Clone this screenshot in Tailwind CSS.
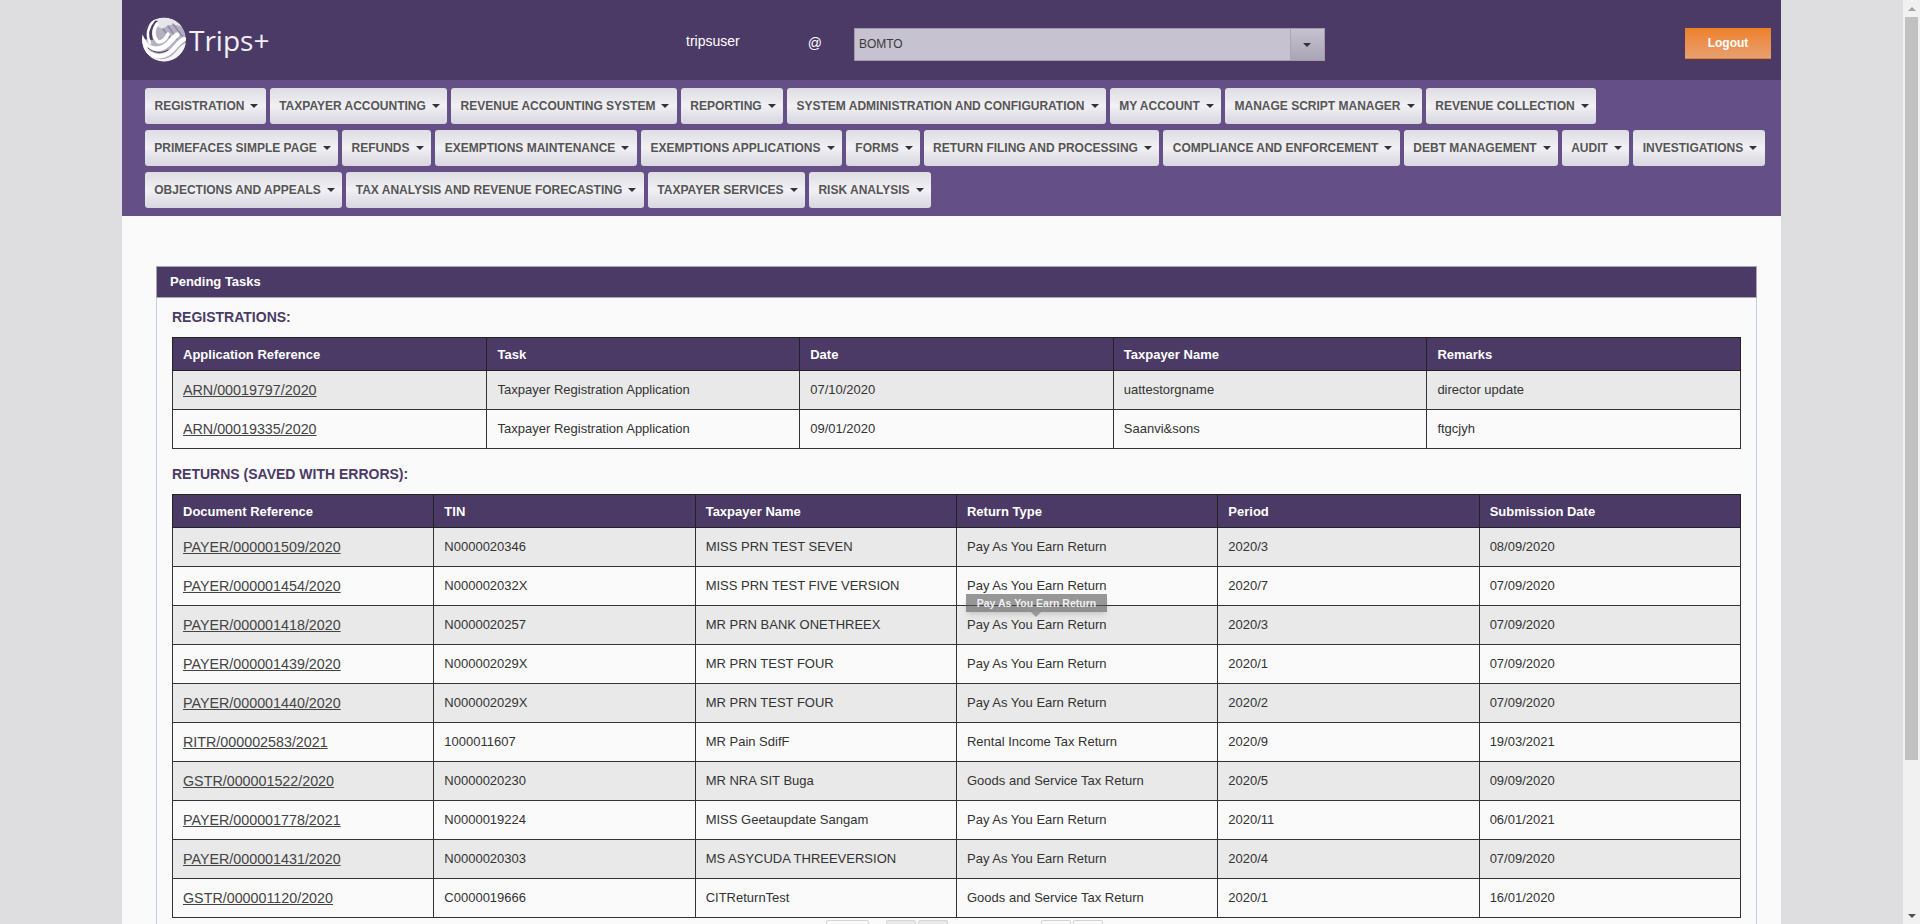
<!DOCTYPE html>
<html lang="en">
<head>
    <meta charset="UTF-8">
    <title>Trips+ Pending Tasks</title>
    <script src="https://cdn.jsdelivr.net/npm/@tailwindcss/browser@4"></script>
</head>
<body class="h-screen overflow-hidden flex bg-[#dedee0] font-['Liberation_Sans',Arial,sans-serif]">

<div class="flex-1 h-[924px] overflow-hidden">
    <div class="w-[1659px] mx-auto h-[1000px] bg-[#fafafa]">

        <!-- top bar -->
        <header class="h-20 bg-[#4b3a66] relative flex items-start">
            <div class="w-[232px] pl-5 pt-[17px] flex items-center gap-[3px] shrink-0">
                <svg width="44" height="45" viewBox="0 0 44 45" class="shrink-0">
                    <defs><clipPath id="globe"><circle cx="22" cy="22.5" r="22"/></clipPath></defs>
                    <g clip-path="url(#globe)" fill="none" stroke-linecap="round">
                        <circle cx="22" cy="22.5" r="22" fill="#b4b0c1" stroke="none"/>
                        <path d="M11 3C20 -2 36 0 44 12C36 7 28 6 22 11C19 13 14 9 11 3Z" fill="#e6e5ec" stroke="none"/>
                        <path d="M26 9L35 22M31 7L41 20M21 12L29 22" stroke="#8f8aa3" stroke-width="1.5"/>
                        <path d="M0 12C8 4 12 3 16 4C10 9 9 16 11 23L0 22Z" fill="#4b3a66" stroke="none"/>
                        <path d="M12 3C6 10 4 18 8 26" stroke="#ffffff" stroke-width="2.5"/>
                        <path d="M15 7C11 13 11 19 15 24C19 27 24 22 26 17" stroke="#ffffff" stroke-width="3.5"/>
                        <path d="M-1 20C3 30 12 35 22 30C28 27 30 21 35 18" stroke="#ffffff" stroke-width="5"/>
                        <path d="M1 30C7 39 18 42 27 36C33 32 35 26 42 22" stroke="#ffffff" stroke-width="4.5"/>
                        <path d="M9 42C18 47 30 45 37 35C39 32 41 30 45 28" stroke="#f4f4f6" stroke-width="5"/>
                        <path d="M6 31C12 36 20 37 26 33" stroke="#4b3a66" stroke-width="1"/>
                    </g>
                </svg>
                <span class="text-[28px] leading-none font-medium text-[#f1f0f5] font-['Open_Sans',sans-serif]">Trips+</span>
            </div>
            <span class="ml-[332px] mt-[31px] text-sm text-white">tripsuser</span>
            <span class="ml-[68px] mt-[33px] text-sm text-white">@</span>
            <div class="ml-[32px] mt-7 w-[471px] h-[33px] flex bg-[#c6c2d0] border border-[#a09cab]">
                <span class="flex-1 pl-[4px] text-xs leading-[30px] text-[#3a3a3a]">BOMTO</span>
                <span class="w-[34px] flex items-center justify-center border-l border-[#aaa6b5] bg-gradient-to-b from-[#c6c2d0] to-[#a9a5b4]">
                    <span class="border-x-[4px] border-t-[4px] border-x-transparent border-t-[#333]"></span>
                </span>
            </div>
            <button class="ml-auto mr-[10px] mt-7 w-[86px] h-[31px] text-xs font-bold text-white border-b border-[#ee7f22] bg-gradient-to-b from-[#ee8026] to-[#e6a06d]">Logout</button>
        </header>

        <!-- main menu -->
        <nav class="h-[136px] bg-[#644f87] pl-[23px] pt-2 flex flex-col gap-[6px]">
            <div class="flex gap-1">
                <button class="h-9 w-[121px] pl-[2px] rounded-[3px] bg-gradient-to-b from-[#dedde3] via-[#f1f0f4] to-[#d8d6df] text-xs text-[#555] flex items-center justify-center gap-[6px] font-bold">REGISTRATION <i class="border-x-[4px] border-t-[4px] border-x-transparent border-t-[#333]"></i></button>
                <button class="h-9 w-[177px] pl-[2px] rounded-[3px] bg-gradient-to-b from-[#dedde3] via-[#f1f0f4] to-[#d8d6df] text-xs text-[#555] flex items-center justify-center gap-[6px] font-bold">TAXPAYER ACCOUNTING <i class="border-x-[4px] border-t-[4px] border-x-transparent border-t-[#333]"></i></button>
                <button class="h-9 w-[226px] pl-[2px] rounded-[3px] bg-gradient-to-b from-[#dedde3] via-[#f1f0f4] to-[#d8d6df] text-xs text-[#555] flex items-center justify-center gap-[6px] font-bold">REVENUE ACCOUNTING SYSTEM <i class="border-x-[4px] border-t-[4px] border-x-transparent border-t-[#333]"></i></button>
                <button class="h-9 w-[102px] pl-[2px] rounded-[3px] bg-gradient-to-b from-[#dedde3] via-[#f1f0f4] to-[#d8d6df] text-xs text-[#555] flex items-center justify-center gap-[6px] font-bold">REPORTING <i class="border-x-[4px] border-t-[4px] border-x-transparent border-t-[#333]"></i></button>
                <button class="h-9 w-[319px] pl-[2px] rounded-[3px] bg-gradient-to-b from-[#dedde3] via-[#f1f0f4] to-[#d8d6df] text-xs text-[#555] flex items-center justify-center gap-[6px] font-bold">SYSTEM ADMINISTRATION AND CONFIGURATION <i class="border-x-[4px] border-t-[4px] border-x-transparent border-t-[#333]"></i></button>
                <button class="h-9 w-[111px] pl-[2px] rounded-[3px] bg-gradient-to-b from-[#dedde3] via-[#f1f0f4] to-[#d8d6df] text-xs text-[#555] flex items-center justify-center gap-[6px] font-bold">MY ACCOUNT <i class="border-x-[4px] border-t-[4px] border-x-transparent border-t-[#333]"></i></button>
                <button class="h-9 w-[197px] pl-[2px] rounded-[3px] bg-gradient-to-b from-[#dedde3] via-[#f1f0f4] to-[#d8d6df] text-xs text-[#555] flex items-center justify-center gap-[6px] font-bold">MANAGE SCRIPT MANAGER <i class="border-x-[4px] border-t-[4px] border-x-transparent border-t-[#333]"></i></button>
                <button class="h-9 w-[170px] pl-[2px] rounded-[3px] bg-gradient-to-b from-[#dedde3] via-[#f1f0f4] to-[#d8d6df] text-xs text-[#555] flex items-center justify-center gap-[6px] font-bold">REVENUE COLLECTION <i class="border-x-[4px] border-t-[4px] border-x-transparent border-t-[#333]"></i></button>
            </div>
            <div class="flex gap-1">
                <button class="h-9 w-[193px] pl-[2px] rounded-[3px] bg-gradient-to-b from-[#dedde3] via-[#f1f0f4] to-[#d8d6df] text-xs text-[#555] flex items-center justify-center gap-[6px] font-bold">PRIMEFACES SIMPLE PAGE <i class="border-x-[4px] border-t-[4px] border-x-transparent border-t-[#333]"></i></button>
                <button class="h-9 w-[89px] pl-[2px] rounded-[3px] bg-gradient-to-b from-[#dedde3] via-[#f1f0f4] to-[#d8d6df] text-xs text-[#555] flex items-center justify-center gap-[6px] font-bold">REFUNDS <i class="border-x-[4px] border-t-[4px] border-x-transparent border-t-[#333]"></i></button>
                <button class="h-9 w-[202px] pl-[2px] rounded-[3px] bg-gradient-to-b from-[#dedde3] via-[#f1f0f4] to-[#d8d6df] text-xs text-[#555] flex items-center justify-center gap-[6px] font-bold">EXEMPTIONS MAINTENANCE <i class="border-x-[4px] border-t-[4px] border-x-transparent border-t-[#333]"></i></button>
                <button class="h-9 w-[201px] pl-[2px] rounded-[3px] bg-gradient-to-b from-[#dedde3] via-[#f1f0f4] to-[#d8d6df] text-xs text-[#555] flex items-center justify-center gap-[6px] font-bold">EXEMPTIONS APPLICATIONS <i class="border-x-[4px] border-t-[4px] border-x-transparent border-t-[#333]"></i></button>
                <button class="h-9 w-[74px] pl-[2px] rounded-[3px] bg-gradient-to-b from-[#dedde3] via-[#f1f0f4] to-[#d8d6df] text-xs text-[#555] flex items-center justify-center gap-[6px] font-bold">FORMS <i class="border-x-[4px] border-t-[4px] border-x-transparent border-t-[#333]"></i></button>
                <button class="h-9 w-[235px] pl-[2px] rounded-[3px] bg-gradient-to-b from-[#dedde3] via-[#f1f0f4] to-[#d8d6df] text-xs text-[#555] flex items-center justify-center gap-[6px] font-bold">RETURN FILING AND PROCESSING <i class="border-x-[4px] border-t-[4px] border-x-transparent border-t-[#333]"></i></button>
                <button class="h-9 w-[237px] pl-[2px] rounded-[3px] bg-gradient-to-b from-[#dedde3] via-[#f1f0f4] to-[#d8d6df] text-xs text-[#555] flex items-center justify-center gap-[6px] font-bold">COMPLIANCE AND ENFORCEMENT <i class="border-x-[4px] border-t-[4px] border-x-transparent border-t-[#333]"></i></button>
                <button class="h-9 w-[154px] pl-[2px] rounded-[3px] bg-gradient-to-b from-[#dedde3] via-[#f1f0f4] to-[#d8d6df] text-xs text-[#555] flex items-center justify-center gap-[6px] font-bold">DEBT MANAGEMENT <i class="border-x-[4px] border-t-[4px] border-x-transparent border-t-[#333]"></i></button>
                <button class="h-9 w-[67px] pl-[2px] rounded-[3px] bg-gradient-to-b from-[#dedde3] via-[#f1f0f4] to-[#d8d6df] text-xs text-[#555] flex items-center justify-center gap-[6px] font-bold">AUDIT <i class="border-x-[4px] border-t-[4px] border-x-transparent border-t-[#333]"></i></button>
                <button class="h-9 w-[132px] pl-[2px] rounded-[3px] bg-gradient-to-b from-[#dedde3] via-[#f1f0f4] to-[#d8d6df] text-xs text-[#555] flex items-center justify-center gap-[6px] font-bold">INVESTIGATIONS <i class="border-x-[4px] border-t-[4px] border-x-transparent border-t-[#333]"></i></button>
            </div>
            <div class="flex gap-1">
                <button class="h-9 w-[197px] pl-[2px] rounded-[3px] bg-gradient-to-b from-[#dedde3] via-[#f1f0f4] to-[#d8d6df] text-xs text-[#555] flex items-center justify-center gap-[6px] font-bold">OBJECTIONS AND APPEALS <i class="border-x-[4px] border-t-[4px] border-x-transparent border-t-[#333]"></i></button>
                <button class="h-9 w-[298px] pl-[2px] rounded-[3px] bg-gradient-to-b from-[#dedde3] via-[#f1f0f4] to-[#d8d6df] text-xs text-[#555] flex items-center justify-center gap-[6px] font-bold">TAX ANALYSIS AND REVENUE FORECASTING <i class="border-x-[4px] border-t-[4px] border-x-transparent border-t-[#333]"></i></button>
                <button class="h-9 w-[157px] pl-[2px] rounded-[3px] bg-gradient-to-b from-[#dedde3] via-[#f1f0f4] to-[#d8d6df] text-xs text-[#555] flex items-center justify-center gap-[6px] font-bold">TAXPAYER SERVICES <i class="border-x-[4px] border-t-[4px] border-x-transparent border-t-[#333]"></i></button>
                <button class="h-9 w-[122px] pl-[2px] rounded-[3px] bg-gradient-to-b from-[#dedde3] via-[#f1f0f4] to-[#d8d6df] text-xs text-[#555] flex items-center justify-center gap-[6px] font-bold">RISK ANALYSIS <i class="border-x-[4px] border-t-[4px] border-x-transparent border-t-[#333]"></i></button>
            </div>
        </nav>

        <!-- pending tasks panel -->
        <section class="ml-[34px] mt-[50px] w-[1601px]">
            <h2 class="h-8 bg-[#4b3a66] border border-[#a9a5b4] pl-[13px] text-[13px] leading-[29px] font-bold text-white">Pending Tasks</h2>
            <div class="border-x border-[#c5d0dc] px-[15px] h-[700px]">
                <h3 class="pt-[11px] h-[39px] text-sm leading-[16px] font-bold text-[#4b3a66]">REGISTRATIONS:</h3>
                <table class="w-full table-fixed border-collapse border border-[#333] text-[13px] text-[#333]">
                    <thead class="bg-[#4b3a66] text-white">
                        <tr class="h-[33px]">
                            <th class="border border-[#222] px-[10px] pt-[1px] text-left">Application Reference</th>
                            <th class="border border-[#222] px-[11px] pt-[1px] text-left">Task</th>
                            <th class="border border-[#222] px-[10px] pt-[1px] text-left">Date</th>
                            <th class="border border-[#222] px-[10px] pt-[1px] text-left">Taxpayer Name</th>
                            <th class="border border-[#222] px-[10px] pt-[1px] text-left">Remarks</th>
                        </tr>
                    </thead>
                    <tbody>
                        <tr class="h-[39px] bg-[#e9e9e9]">
                            <td class="border border-[#333] px-[10px] pt-[2px]"><a class="underline text-[14.3px] text-[#444]">ARN/00019797/2020</a></td>
                            <td class="border border-[#333] px-[11px]">Taxpayer Registration Application</td>
                            <td class="border border-[#333] px-[10px]">07/10/2020</td>
                            <td class="border border-[#333] px-[10px]">uattestorgname</td>
                            <td class="border border-[#333] px-[10px]">director update</td>
                        </tr>
                        <tr class="h-[39px]">
                            <td class="border border-[#333] px-[10px] pt-[2px]"><a class="underline text-[14.3px] text-[#444]">ARN/00019335/2020</a></td>
                            <td class="border border-[#333] px-[11px]">Taxpayer Registration Application</td>
                            <td class="border border-[#333] px-[10px]">09/01/2020</td>
                            <td class="border border-[#333] px-[10px]">Saanvi&amp;sons</td>
                            <td class="border border-[#333] px-[10px]">ftgcjyh</td>
                        </tr>
                    </tbody>
                </table>
                <h3 class="pt-[17px] h-[45px] text-sm leading-[16px] font-bold text-[#4b3a66]">RETURNS (SAVED WITH ERRORS):</h3>
                <div class="relative">
                    <table class="w-full table-fixed border-collapse border border-[#333] text-[13px] text-[#333]">
                        <thead class="bg-[#4b3a66] text-white">
                            <tr class="h-[33px]">
                                <th class="border border-[#222] px-[10px] pt-[1px] text-left">Document Reference</th>
                                <th class="border border-[#222] px-[10px] pt-[1px] text-left">TIN</th>
                                <th class="border border-[#222] px-[10px] pt-[1px] text-left">Taxpayer Name</th>
                                <th class="border border-[#222] px-[10px] pt-[1px] text-left">Return Type</th>
                                <th class="border border-[#222] px-[10px] pt-[1px] text-left">Period</th>
                                <th class="border border-[#222] px-[10px] pt-[1px] text-left">Submission Date</th>
                            </tr>
                        </thead>
                        <tbody>
                            <tr class="h-[39px] bg-[#e9e9e9]"><td class="border border-[#333] px-[10px] pt-[2px]"><a class="underline text-[14.3px] text-[#444]">PAYER/000001509/2020</a></td><td class="border border-[#333] px-[10px]">N0000020346</td><td class="border border-[#333] px-[10px]">MISS PRN TEST SEVEN</td><td class="border border-[#333] px-[10px]">Pay As You Earn Return</td><td class="border border-[#333] px-[10px]">2020/3</td><td class="border border-[#333] px-[10px]">08/09/2020</td></tr>
                            <tr class="h-[39px]"><td class="border border-[#333] px-[10px] pt-[2px]"><a class="underline text-[14.3px] text-[#444]">PAYER/000001454/2020</a></td><td class="border border-[#333] px-[10px]">N000002032X</td><td class="border border-[#333] px-[10px]">MISS PRN TEST FIVE VERSION</td><td class="border border-[#333] px-[10px]">Pay As You Earn Return</td><td class="border border-[#333] px-[10px]">2020/7</td><td class="border border-[#333] px-[10px]">07/09/2020</td></tr>
                            <tr class="h-[39px] bg-[#e9e9e9]"><td class="border border-[#333] px-[10px] pt-[2px]"><a class="underline text-[14.3px] text-[#444]">PAYER/000001418/2020</a></td><td class="border border-[#333] px-[10px]">N0000020257</td><td class="border border-[#333] px-[10px]">MR PRN BANK ONETHREEX</td><td class="border border-[#333] px-[10px]">Pay As You Earn Return</td><td class="border border-[#333] px-[10px]">2020/3</td><td class="border border-[#333] px-[10px]">07/09/2020</td></tr>
                            <tr class="h-[39px]"><td class="border border-[#333] px-[10px] pt-[2px]"><a class="underline text-[14.3px] text-[#444]">PAYER/000001439/2020</a></td><td class="border border-[#333] px-[10px]">N000002029X</td><td class="border border-[#333] px-[10px]">MR PRN TEST FOUR</td><td class="border border-[#333] px-[10px]">Pay As You Earn Return</td><td class="border border-[#333] px-[10px]">2020/1</td><td class="border border-[#333] px-[10px]">07/09/2020</td></tr>
                            <tr class="h-[39px] bg-[#e9e9e9]"><td class="border border-[#333] px-[10px] pt-[2px]"><a class="underline text-[14.3px] text-[#444]">PAYER/000001440/2020</a></td><td class="border border-[#333] px-[10px]">N000002029X</td><td class="border border-[#333] px-[10px]">MR PRN TEST FOUR</td><td class="border border-[#333] px-[10px]">Pay As You Earn Return</td><td class="border border-[#333] px-[10px]">2020/2</td><td class="border border-[#333] px-[10px]">07/09/2020</td></tr>
                            <tr class="h-[39px]"><td class="border border-[#333] px-[10px] pt-[2px]"><a class="underline text-[14.3px] text-[#444]">RITR/000002583/2021</a></td><td class="border border-[#333] px-[10px]">1000011607</td><td class="border border-[#333] px-[10px]">MR Pain SdifF</td><td class="border border-[#333] px-[10px]">Rental Income Tax Return</td><td class="border border-[#333] px-[10px]">2020/9</td><td class="border border-[#333] px-[10px]">19/03/2021</td></tr>
                            <tr class="h-[39px] bg-[#e9e9e9]"><td class="border border-[#333] px-[10px] pt-[2px]"><a class="underline text-[14.3px] text-[#444]">GSTR/000001522/2020</a></td><td class="border border-[#333] px-[10px]">N0000020230</td><td class="border border-[#333] px-[10px]">MR NRA SIT Buga</td><td class="border border-[#333] px-[10px]">Goods and Service Tax Return</td><td class="border border-[#333] px-[10px]">2020/5</td><td class="border border-[#333] px-[10px]">09/09/2020</td></tr>
                            <tr class="h-[39px]"><td class="border border-[#333] px-[10px] pt-[2px]"><a class="underline text-[14.3px] text-[#444]">PAYER/000001778/2021</a></td><td class="border border-[#333] px-[10px]">N0000019224</td><td class="border border-[#333] px-[10px]">MISS Geetaupdate Sangam</td><td class="border border-[#333] px-[10px]">Pay As You Earn Return</td><td class="border border-[#333] px-[10px]">2020/11</td><td class="border border-[#333] px-[10px]">06/01/2021</td></tr>
                            <tr class="h-[39px] bg-[#e9e9e9]"><td class="border border-[#333] px-[10px] pt-[2px]"><a class="underline text-[14.3px] text-[#444]">PAYER/000001431/2020</a></td><td class="border border-[#333] px-[10px]">N0000020303</td><td class="border border-[#333] px-[10px]">MS ASYCUDA THREEVERSION</td><td class="border border-[#333] px-[10px]">Pay As You Earn Return</td><td class="border border-[#333] px-[10px]">2020/4</td><td class="border border-[#333] px-[10px]">07/09/2020</td></tr>
                            <tr class="h-[39px]"><td class="border border-[#333] px-[10px] pt-[2px]"><a class="underline text-[14.3px] text-[#444]">GSTR/000001120/2020</a></td><td class="border border-[#333] px-[10px]">C0000019666</td><td class="border border-[#333] px-[10px]">CITReturnTest</td><td class="border border-[#333] px-[10px]">Goods and Service Tax Return</td><td class="border border-[#333] px-[10px]">2020/1</td><td class="border border-[#333] px-[10px]">16/01/2020</td></tr>
                        </tbody>
                    </table>
                    <!-- tooltip over the return type column -->
                    <div class="absolute left-[794px] top-[100px] w-[141px] h-[18px] bg-[#555]/60 shadow-md text-[10.5px] leading-[18px] font-bold text-center text-[#f0f0f0]">Pay As You Earn Return
                        <span class="absolute left-[65px] top-[18px] border-x-[5px] border-t-[5px] border-x-transparent border-t-[#999]"></span>
                    </div>
                    <!-- paginator, cut off by the fold -->
                    <div class="absolute top-[426px] left-[654px] flex">
                        <span class="w-[43px] h-8 bg-[#fafafa] border border-[#d5d5d5] rounded-[2px]"></span>
                        <span class="ml-[17px] w-[30px] h-8 bg-[#e9e9e9] border border-[#d5d5d5] rounded-[2px]"></span>
                        <span class="ml-[2px] w-[30px] h-8 bg-[#e9e9e9] border border-[#d5d5d5] rounded-[2px]"></span>
                        <span class="ml-[93px] w-[30px] h-8 bg-[#fafafa] border border-[#d5d5d5] rounded-[2px]"></span>
                        <span class="ml-[2px] w-[30px] h-8 bg-[#fafafa] border border-[#d5d5d5] rounded-[2px]"></span>
                    </div>
                </div>
            </div>
        </section>
    </div>
</div>

<!-- browser scrollbar -->
<div class="w-[17px] h-[924px] bg-[#f1f1f1] flex flex-col items-center shrink-0">
    <span class="h-[17px] flex items-center justify-center"><i class="border-x-[4px] border-b-[4px] border-x-transparent border-b-[#a3a3a3]"></i></span>
    <span class="w-[13px] h-[743px] bg-[#c1c1c1]"></span>
    <span class="mt-auto h-[17px] flex items-center justify-center"><i class="border-x-[4px] border-t-[4px] border-x-transparent border-t-[#505050]"></i></span>
</div>

</body>
</html>
